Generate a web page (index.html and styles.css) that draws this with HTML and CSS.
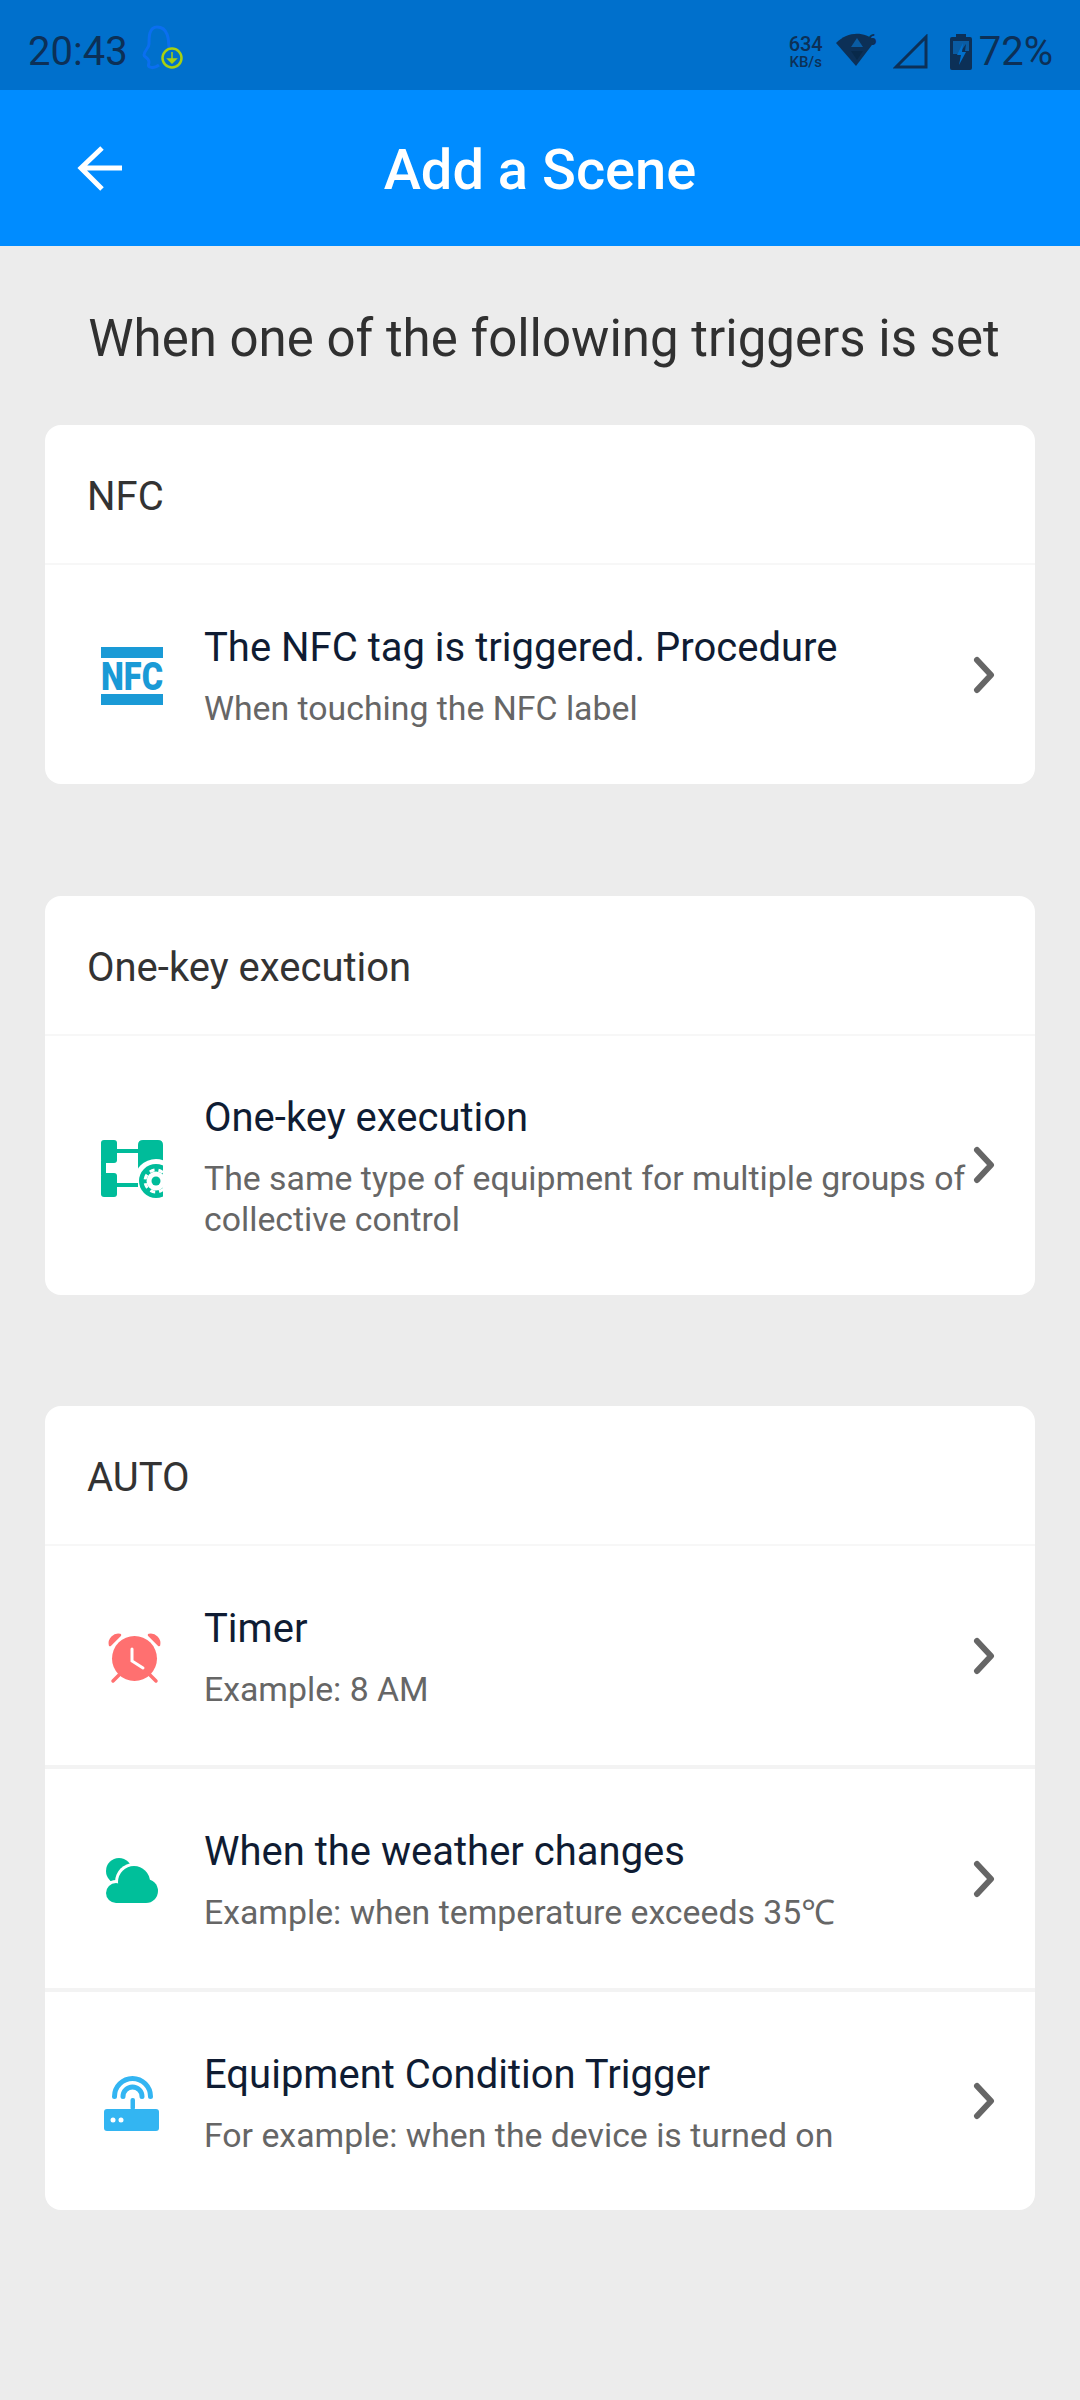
FILE: index.html
```html
<!DOCTYPE html>
<html lang="en">
<head>
    <meta charset="UTF-8">
    <title>Add a Scene</title>
    <link rel="stylesheet" href="styles.css">
</head>
<body>
<div class="status">
    <span class="time">20:43</span>
    <svg class="qq" width="44" height="48" viewBox="0 0 44 48">
        <path d="M28 27 C28 15 27 3 16 3 C8 3 8 13 8 20 C8 24 3 27 3 31 C3 33 8 34 8 38 C8 41 6 42 9 43 C11 44 14 44 18 41" fill="none" stroke="#0a6ff0" stroke-width="3"/>
        <circle cx="31" cy="34" r="9.500" fill="#0070cc" stroke="#a8d010" stroke-width="2.500"/>
        <path d="M31 28 V36 M27 35 H35 L31 39 Z" fill="#a8d010" stroke="#a8d010" stroke-width="1.500"/>
    </svg>
    <span class="spacer"></span>
    <span class="speed"><b>634</b><b class="unit">KB/s</b></span>
    <svg class="wifi" width="44" height="36" viewBox="0 0 44 36">
        <path d="M0 11 C12 -1 28 -1 39 9 L20 34 Z" fill="#0c3057"/>
        <path d="M21 6 L27 15 H15 Z" fill="#0a5ca3"/>
        <path d="M21 28 L27 19 H15 Z" fill="#08294a"/>
        <text x="32" y="13" class="wifi-six">6</text>
    </svg>
    <svg class="signal" width="36" height="36" viewBox="0 0 36 36">
        <path d="M3 33 L33 3 V33 Z" fill="none" stroke="#0c3057" stroke-width="3"/>
    </svg>
    <svg class="battery" width="22" height="36" viewBox="0 0 22 36">
        <path d="M6 0 H16 V3 H20 Q22 3 22 5 V34 Q22 36 20 36 H2 Q0 36 0 34 V5 Q0 3 2 3 H6 Z" fill="#0c3057"/>
        <path d="M3 7 H19 V17 H15 L16 10 L9 20 H3 Z" fill="#0a5ca3"/>
        <path d="M13 9 L7 21 H11 L9 31 L16 18 H12 Z" fill="#0070cc"/>
    </svg>
    <span class="percent">72%</span>
</div>

<div class="appbar">
    <svg class="back" width="46" height="46" viewBox="0 0 46 46">
        <path d="M3 23 H45 M25 3 L4 23 L25 44" fill="none" stroke="#fff" stroke-width="5"/>
    </svg>
    <h1>Add a Scene</h1>
</div>

<p class="lead">When one of the following triggers is set</p>

<div class="card">
    <div class="card-head">NFC</div>
    <div class="row">
        <svg class="ico" width="80" height="80" viewBox="0 0 80 80">
            <rect x="9" y="12" width="62" height="11" fill="#1a9ad6"/>
            <rect x="9" y="59" width="62" height="11" fill="#1a9ad6"/>
            <text x="9" y="55" class="nfc" textLength="62" lengthAdjust="spacingAndGlyphs">NFC</text>
        </svg>
        <div class="txt">
            <div class="t">The NFC tag is triggered. Procedure</div>
            <div class="s">When touching the NFC label</div>
        </div>
        <svg class="chev" width="24" height="40" viewBox="0 0 24 40"><path d="M4 5 L18 20 L4 35" fill="none" stroke="#666" stroke-width="6" stroke-linecap="round" stroke-linejoin="round"/></svg>
    </div>
</div>

<div class="card">
    <div class="card-head">One-key execution</div>
    <div class="row row-tall">
        <svg class="ico" width="80" height="80" viewBox="0 0 80 80">
            <rect x="9" y="15" width="16" height="23" rx="3" fill="#00bc9a"/>
            <rect x="9" y="48" width="16" height="24" rx="3" fill="#00bc9a"/>
            <rect x="9" y="36" width="5" height="14" fill="#00bc9a"/>
            <rect x="25" y="24" width="22" height="4" fill="#00bc9a"/>
            <rect x="25" y="58" width="22" height="4" fill="#00bc9a"/>
            <svg x="46" y="15" width="25" height="60" viewBox="0 0 25 60">
                <path d="M0 5 Q0 0 5 0 H20 Q25 0 25 5 V40 H0 Z" fill="#00bc9a"/>
                <circle cx="18" cy="41" r="22" fill="#fff"/>
                <circle cx="18" cy="41" r="17" fill="#00bc9a"/>
                <circle cx="18" cy="41" r="9.500" fill="#fff"/>
                <circle cx="18" cy="41" r="11" fill="none" stroke="#fff" stroke-width="3" stroke-dasharray="5 4"/>
                <circle cx="18" cy="41" r="4.500" fill="#00bc9a"/>
            </svg>
        </svg>
        <div class="txt">
            <div class="t">One-key execution</div>
            <div class="s">The same type of equipment for multiple groups of collective control</div>
        </div>
        <svg class="chev" width="24" height="40" viewBox="0 0 24 40"><path d="M4 5 L18 20 L4 35" fill="none" stroke="#666" stroke-width="6" stroke-linecap="round" stroke-linejoin="round"/></svg>
    </div>
</div>

<div class="card">
    <div class="card-head">AUTO</div>
    <div class="row">
        <svg class="ico" width="80" height="80" viewBox="0 0 80 80">
            <circle cx="42.500" cy="42.500" r="22.500" fill="#ff7070"/>
            <path d="M18 29 A8.500 8.500 0 0 1 28 19 Z M57 19 A8.500 8.500 0 0 1 67 29 Z" fill="#ff7070" stroke="#ff7070" stroke-width="2.500" stroke-linejoin="round"/>
            <path d="M40 33 V45 L51 52" fill="none" stroke="#fff" stroke-width="3" stroke-linecap="round"/>
            <path d="M28 58 L21 65 M57 58 L64 65" fill="none" stroke="#ff7070" stroke-width="3.500" stroke-linecap="round"/>
        </svg>
        <div class="txt">
            <div class="t">Timer</div>
            <div class="s">Example: 8 AM</div>
        </div>
        <svg class="chev" width="24" height="40" viewBox="0 0 24 40"><path d="M4 5 L18 20 L4 35" fill="none" stroke="#666" stroke-width="6" stroke-linecap="round" stroke-linejoin="round"/></svg>
    </div>
    <div class="row row-line">
        <svg class="ico" width="80" height="80" viewBox="0 0 80 80">
            <circle cx="27" cy="32" r="13" fill="#00bf9a"/>
            <circle cx="42" cy="43" r="19" fill="#fff"/>
            <circle cx="24" cy="54" r="13" fill="#fff"/>
            <circle cx="24" cy="54" r="10" fill="#00bf9a"/>
            <circle cx="42" cy="43" r="16" fill="#00bf9a"/>
            <circle cx="54" cy="52" r="12" fill="#00bf9a"/>
            <rect x="24" y="50" width="30" height="14" fill="#00bf9a"/>
        </svg>
        <div class="txt">
            <div class="t">When the weather changes</div>
            <div class="s">Example: when temperature exceeds 35℃</div>
        </div>
        <svg class="chev" width="24" height="40" viewBox="0 0 24 40"><path d="M4 5 L18 20 L4 35" fill="none" stroke="#666" stroke-width="6" stroke-linecap="round" stroke-linejoin="round"/></svg>
    </div>
    <div class="row row-line">
        <svg class="ico" width="80" height="80" viewBox="0 0 80 80">
            <rect x="12" y="48" width="55" height="22" rx="3" fill="#33b5f2"/>
            <rect x="38.500" y="37" width="4.500" height="12" rx="2" fill="#33b5f2"/>
            <path d="M22.500 35.500 A18 18 0 0 1 58.500 35.500 M31 35.500 A9.500 9.500 0 0 1 50 35.500" fill="none" stroke="#33b5f2" stroke-width="5" stroke-linecap="round"/>
            <circle cx="21" cy="59" r="2.500" fill="#fff"/>
            <circle cx="29" cy="59" r="2.500" fill="#fff"/>
        </svg>
        <div class="txt">
            <div class="t">Equipment Condition Trigger</div>
            <div class="s">For example: when the device is turned on</div>
        </div>
        <svg class="chev" width="24" height="40" viewBox="0 0 24 40"><path d="M4 5 L18 20 L4 35" fill="none" stroke="#666" stroke-width="6" stroke-linecap="round" stroke-linejoin="round"/></svg>
    </div>
</div>
</body>
</html>
```
FILE: styles.css
```css
*{
    margin: 0;
    padding: 0;
    box-sizing: border-box;
}
html,body{
    height: 100%;
}
body{
    background: #ececec;
    font-family: Roboto, "Noto Sans", sans-serif;
    overflow: hidden;
}
.status{
    height: 90px;
    background: #0070cc;
    color: #0c3057;
    display: flex;
    align-items: center;
    padding: 0 27px 0 28px;
}
.time{
    font-size: 40px;
    line-height: 44px;
    margin-top: 14px;
}
.qq{
    margin: 6px 0 0 13px;
}
.spacer{
    flex: 1;
}
.speed{
    display: flex;
    flex-direction: column;
    align-items: center;
    margin-top: 14px;
    font-size: 20px;
    line-height: 20px;
}
.speed b{
    font-weight: 500;
}
.speed .unit{
    font-size: 15px;
    line-height: 16px;
}
.wifi{
    margin: 10px 0 0 13px;
}
.wifi-six{
    font: 700 15px Roboto, sans-serif;
    fill: #0c3057;
}
.signal{
    margin: 14px 0 0 13px;
}
.battery{
    margin: 14px 0 0 21px;
}
.percent{
    font-size: 40px;
    line-height: 44px;
    margin: 14px 0 0 7px;
}
.appbar{
    height: 156px;
    background: #008cff;
    display: flex;
    align-items: center;
    justify-content: center;
    position: relative;
}
.back{
    position: absolute;
    left: 77px;
    top: 55px;
}
.appbar h1{
    color: #fff;
    font-size: 56px;
    font-weight: 500;
    padding-top: 3px;
}
.lead{
    height: 179px;
    padding: 63px 0 0 8px;
    font-size: 51px;
    line-height: 60px;
    color: #303030;
    text-align: center;
    white-space: nowrap;
}
.card{
    background: #fff;
    border-radius: 16px;
    margin: 0 45px 111.500px;
}
.card-head{
    height: 140px;
    padding: 5px 0 0 42px;
    display: flex;
    align-items: center;
    font-size: 40px;
    color: #333;
    border-bottom: 2px solid #f7f7f7;
}
.row{
    height: 219px;
    display: flex;
    align-items: center;
    padding: 0 38px 0 47px;
}
.row-tall{
    height: 259px;
}
.row-line{
    height: 223px;
    border-top: 4px solid #f3f3f3;
}
.row-line:last-child{
    height: 222px;
}
.ico{
    flex: none;
    margin-right: 32px;
    overflow: visible;
}
.txt{
    flex: 1;
    padding-top: 5px;
}
.t{
    font-size: 40px;
    line-height: 46px;
    color: #0f1c33;
    margin-bottom: 17px;
}
.s{
    font-size: 33.800px;
    line-height: 41px;
    color: #666;
}
.chev{
    flex: none;
}
.nfc{
    font: 900 39px Roboto, sans-serif;
    fill: #1a9ad6;
}
```
